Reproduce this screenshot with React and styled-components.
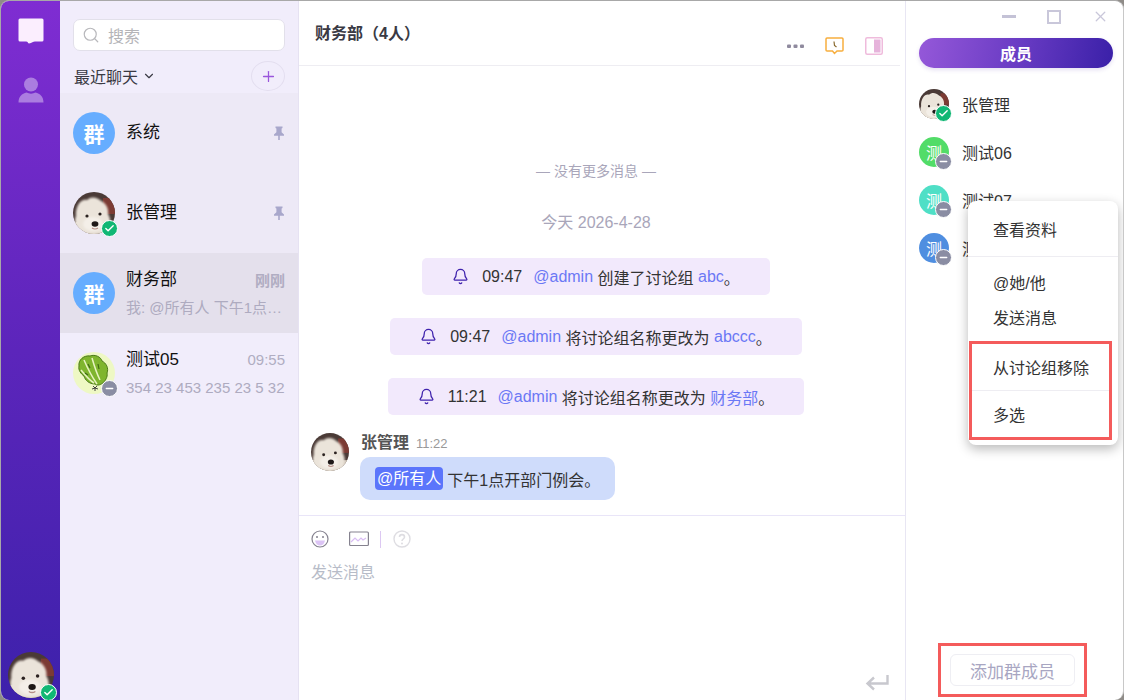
import { useId } from 'react';
import styled, { createGlobalStyle } from 'styled-components';
import { Search, ChevronDown, Plus, Bell, Check, Minus, X } from 'lucide-react';

const GlobalStyle = createGlobalStyle`
  html, body {
    margin: 0;
    padding: 0;
    background: #8f8c88;
    overflow: hidden;
  }
  * {
    box-sizing: border-box;
  }
  body {
    font-family: "Liberation Sans", "Noto Sans CJK SC", sans-serif;
    font-size: 16px;
    color: #333;
  }
`;

const Window = styled.div`
  position: relative;
  display: flex;
  width: 1124px;
  height: 700px;
  background: #fff;
  border-radius: 9px;
  border: 1px solid #a8a8a8;
  border-bottom: 0;
  border-right-color: #c8c8c8;
  overflow: hidden;
`;

const Sidebar = styled.aside`
  flex: 0 0 59px;
  display: flex;
  flex-direction: column;
  align-items: center;
  justify-content: space-between;
  padding: 17px 0 2px;
  background: linear-gradient(180deg, #7f2dd2 0%, #5c25bb 50%, #3d21ab 100%);
`;

const NavIcons = styled.div`
  display: flex;
  flex-direction: column;
  align-items: center;
  gap: 33px;
`;

const ListPane = styled.section`
  flex: 0 0 239px;
  display: flex;
  flex-direction: column;
  background: #f1edfb;
  border-right: 1px solid #e6e2f2;
`;

const SearchBox = styled.div`
  display: flex;
  align-items: center;
  gap: 8px;
  height: 32px;
  margin: 18px 13px 0;
  padding: 0 8px;
  background: #fff;
  border: 1px solid #e2e0ea;
  border-radius: 7px;
  color: #b4b4b8;
`;

const ListHead = styled.div`
  display: flex;
  align-items: center;
  justify-content: space-between;
  height: 30px;
  margin: 10px 13px 2px 14px;
`;

const ListTitle = styled.div`
  display: flex;
  align-items: center;
  gap: 4px;
  color: #3a3a44;
`;

const AddRound = styled.div`
  width: 34px;
  height: 30px;
  display: flex;
  align-items: center;
  justify-content: center;
  border: 1px solid #e3deef;
  border-radius: 50%;
  color: #9a56dc;
`;

const Row = styled.div`
  display: flex;
  align-items: center;
  gap: 11px;
  height: 80px;
  padding: 0 13px;
  background: ${(p) => (p.$active ? '#e4e0ec' : p.$pinned ? '#ede9f6' : 'transparent')};
`;

const RowBody = styled.div`
  flex: 1;
  min-width: 0;
  display: flex;
  flex-direction: column;
  gap: 7px;
`;

const RowLine = styled.div`
  display: flex;
  align-items: center;
  justify-content: space-between;
`;

const RowName = styled.span`
  font-size: 17px;
  line-height: 22px;
  color: #111;
`;

const RowTime = styled.span`
  font-size: 15px;
  font-weight: ${(p) => (p.$bold ? 700 : 400)};
  color: #b0adc2;
`;

const RowText = styled.div`
  font-size: 15px;
  line-height: 20px;
  color: #aeabc0;
  white-space: nowrap;
  overflow: hidden;
`;

const AvatarWrap = styled.div`
  position: relative;
  flex: 0 0 ${(p) => p.$size}px;
  width: ${(p) => p.$size}px;
  height: ${(p) => p.$size}px;
`;

const LetterAvatar = styled.div`
  width: 100%;
  height: 100%;
  display: flex;
  align-items: center;
  justify-content: center;
  border-radius: 50%;
  background: ${(p) => p.$bg};
  color: #fff;
  font-size: ${(p) => p.$fs}px;
  font-weight: ${(p) => p.$fw};
`;

const StatusDot = styled.span`
  position: absolute;
  right: -3px;
  bottom: -3px;
  width: 17px;
  height: 17px;
  display: flex;
  align-items: center;
  justify-content: center;
  border-radius: 50%;
  border: 1px solid #fff;
  background: ${(p) => (p.$on ? '#10b774' : '#8a8da3')};
  color: #fff;
`;

const ChatPane = styled.main`
  flex: 0 0 607px;
  display: flex;
  flex-direction: column;
  border-right: 1px solid #e8e6f3;
`;

const ChatHead = styled.header`
  flex: 0 0 65px;
  display: flex;
  justify-content: space-between;
  margin-right: 5px;
  padding: 23px 17px 0 16px;
  border-bottom: 1px solid #eeedf2;
`;

const ChatTitle = styled.h1`
  margin: 0;
  font-size: 16px;
  line-height: 20px;
  font-weight: 700;
  color: #3a3a44;
`;

const HeadIcons = styled.div`
  display: flex;
  align-items: center;
  gap: 21px;
  height: 20px;
  margin-top: 12px;
`;

const Messages = styled.div`
  flex: 1;
  display: flex;
  flex-direction: column;
  align-items: center;
  padding: 95px 12px 0 0;
`;

const NoMore = styled.div`
  font-size: 14px;
  line-height: 20px;
  color: #a9a6ba;
`;

const DayLine = styled.div`
  margin-top: 31px;
  line-height: 22px;
  color: #a9a6ba;
`;

const Notice = styled.div`
  display: flex;
  align-items: center;
  height: 37px;
  margin-top: ${(p) => p.$top}px;
  padding: 0 30px;
  background: #f2e9fc;
  border-radius: 5px;
  color: #333;
  white-space: pre;
`;

const NoticeTime = styled.span`
  margin: 0 11px 0 13px;
`;

const LinkText = styled.span`
  color: #6b78f5;
`;

const Message = styled.div`
  align-self: flex-start;
  display: flex;
  gap: 12px;
  margin: 18px 0 0 12px;
`;

const MessageBody = styled.div`
  display: flex;
  flex-direction: column;
  gap: 3px;
`;

const Sender = styled.div`
  display: flex;
  align-items: baseline;
  gap: 7px;
  line-height: 20px;
  font-weight: 700;
  color: #555;
`;

const SentAt = styled.span`
  font-size: 13px;
  font-weight: 400;
  color: #999;
`;

const Bubble = styled.div`
  display: flex;
  align-items: center;
  gap: 4px;
  height: 43px;
  margin-left: -1px;
  padding: 0 15px;
  background: #cfdcfb;
  border-radius: 10px;
`;

const Mention = styled.span`
  padding: 0 2px;
  line-height: 23px;
  background: #5b75fb;
  border-radius: 4px;
  color: #fff;
`;

const Composer = styled.div`
  position: relative;
  flex: 0 0 185px;
  padding: 13px 12px 0;
  border-top: 1px solid #e9e5f8;
`;

const ComposerTools = styled.div`
  display: flex;
  align-items: center;
  height: 20px;
`;

const ToolRule = styled.span`
  width: 1px;
  height: 17px;
  margin: 0 12px 0 11px;
  background: #dcc8f2;
`;

const Placeholder = styled.div`
  margin-top: 12px;
  line-height: 24px;
  color: #b7bcc8;
`;

const EnterIcon = styled.div`
  position: absolute;
  right: 16px;
  bottom: 8px;
  display: flex;
`;

const MemberPane = styled.aside`
  flex: 1;
  display: flex;
  flex-direction: column;
  padding: 0 10px 3px 13px;
`;

const WindowBar = styled.div`
  display: flex;
  align-items: center;
  justify-content: flex-end;
  gap: 31px;
  height: 37px;
  padding: 0 4px 6px 0;
  color: #c9c7da;
`;

const TabPill = styled.div`
  height: 30px;
  display: flex;
  align-items: center;
  justify-content: center;
  font-weight: 700;
  color: #fff;
  border-radius: 15px;
  background: linear-gradient(100deg, #9558d9 0%, #6a3cc4 50%, #3a20a8 100%);
  box-shadow: 0 2px 4px rgba(80, 50, 170, 0.15);
`;

const MemberList = styled.div`
  flex: 1;
  display: flex;
  flex-direction: column;
  gap: 18px;
  padding-top: 21px;
`;

const Member = styled.div`
  display: flex;
  align-items: center;
  gap: 13px;
  color: #333;
`;

const MemberFoot = styled.div`
  display: flex;
  justify-content: center;
  margin-right: 7px;
`;

const RedFrame = styled.div`
  border: 3px solid #f45b5b;
  padding: ${(p) => p.$pad || 0};
`;

const AddButton = styled.div`
  width: 125px;
  height: 32px;
  display: flex;
  align-items: center;
  justify-content: center;
  font-size: 17px;
  color: #a8a6c2;
  border: 1px solid #eeeef3;
  border-radius: 6px;
`;

const Menu = styled.div`
  position: absolute;
  left: 967px;
  top: 200px;
  width: 150px;
  padding: 1px 0 5px;
  background: #fff;
  border-radius: 8px;
  box-shadow: 0 4px 12px rgba(0, 0, 0, 0.28);
`;

const MenuItem = styled.div`
  display: flex;
  align-items: center;
  height: ${(p) => p.$h || 35}px;
  padding-left: ${(p) => p.$inset || 25}px;
  color: #333;
`;

const MenuRule = styled.div`
  height: 1px;
  background: #eeedf2;
`;

const MenuGroup = styled.div`
  padding: ${(p) => p.$pad};
`;

function Dog({ size }) {
  const id = useId();
  return (
    <svg width={size} height={size} viewBox="0 0 42 42" style={{ display: 'block' }}>
      <defs>
        <clipPath id={id}>
          <circle cx="21" cy="21" r="21" />
        </clipPath>
        <filter id={`${id}b`}>
          <feGaussianBlur stdDeviation="0.9" />
        </filter>
      </defs>
      <g clipPath={`url(#${id})`}>
        <rect width="42" height="42" fill="#4a3a36" />
        <rect x="30" y="6" width="12" height="16" fill="#7c3b34" />
        <rect y="30" width="42" height="12" fill="#cfc4b6" />
        <g filter={`url(#${id}b)`}>
          <path d="M3 24C2 13 9 6 14 8c4-4 10-3 14 1 3 1 8 6 7 13 3 5 3 11 0 16-5 4-22 6-28 1C2 34 1 28 3 24z" fill="#ebe4da" />
          <ellipse cx="20" cy="32" rx="10" ry="7" fill="#f4efe8" />
        </g>
        <circle cx="14" cy="24" r="1.6" fill="#2b2220" />
        <circle cx="27" cy="22" r="1.6" fill="#2b2220" />
        <ellipse cx="22" cy="32" rx="3.4" ry="2.8" fill="#1e1817" />
        <path d="M19 36q3 2 6 0" stroke="#b58e86" strokeWidth="1.2" fill="none" />
      </g>
    </svg>
  );
}

function Cabbage({ size }) {
  return (
    <svg width={size} height={size} viewBox="0 0 42 42" style={{ display: 'block' }}>
      <circle cx="21" cy="21" r="21" fill="#eef8c4" />
      <path d="M6 14C5 8 11 3 17 4c5-2 11 1 12 5 4 2 7 7 5 12 1 4-2 8-4 10-3 2-6 3-8 1-6 0-10-4-11-8-3-2-6-6-5-10z" fill="#7fb52e" stroke="#4c7a1a" strokeWidth="1" />
      <path d="M11 8c3 7 6 14 13 24M19 6c2 7 4 14 8 22M8 18c4 5 8 10 13 13" stroke="#e7f3c0" strokeWidth="1.5" fill="none" />
      <path d="M15 12l2 4M25 12l1 5M12 21l3 2" stroke="#3f6b14" strokeWidth="1.2" fill="none" />
      <path d="M20 34l2 2 2-2m-2 2v3m-3-2l3-1 3 1" stroke="#333" strokeWidth="0.9" fill="none" />
    </svg>
  );
}

function PinIcon() {
  return (
    <svg width="12" height="14" viewBox="0 0 12 14">
      <path d="M2.5 0.5h7v1.4L8.6 2.6v3.6L11 8.6V9.8H6.8V14H5.2V9.8H1V8.6l2.4-2.4V2.6L2.5 1.9z" fill="#a8a7cb" />
    </svg>
  );
}

function Status({ on }) {
  return (
    <StatusDot $on={on}>
      {on ? <Check size={11} strokeWidth={3} /> : <Minus size={11} strokeWidth={3} />}
    </StatusDot>
  );
}

function Notification({ top, time, action, target }) {
  return (
    <Notice $top={top}>
      <Bell size={17} color="#3f22ad" strokeWidth={1.8} />
      <NoticeTime>{time}</NoticeTime>
      <LinkText>@admin</LinkText>
      {` ${action} `}
      <LinkText>{target}</LinkText>。
    </Notice>
  );
}

const members = [
  { name: '测试06', bg: '#52dc68' },
  { name: '测试07', bg: '#4fdfc6' },
  { name: '测试08', bg: '#4f8ee0' },
];

export default function App() {
  return (
    <Window>
      <GlobalStyle />
      <Sidebar>
        <NavIcons>
          <svg width="26" height="26" viewBox="0 0 26 26">
            <path d="M2 0.5h22a1.5 1.5 0 0 1 1.5 1.5v20a1.5 1.5 0 0 1-1.5 1.500h-7c-2 0-3 1.500-6 2-1 0-1-2-3-2H2A1.500 1.500 0 0 1 .5 22V2A1.500 1.500 0 0 1 2 .5z" fill="#fbeefe" />
          </svg>
          <svg width="26" height="26" viewBox="0 0 26 26">
            <circle cx="13" cy="7.500" r="7" fill="#ab7de0" />
            <path d="M0.500 25.500c0-6 3.500-9 8-10 2.500 1.500 6.500 1.500 9 0 4.500 1 8 4 8 10z" fill="#ab7de0" />
          </svg>
        </NavIcons>
        <AvatarWrap $size={46}>
          <Dog size={46} />
          <Status on />
        </AvatarWrap>
      </Sidebar>

      <ListPane>
        <SearchBox>
          <Search size={18} strokeWidth={1.6} color="#b8b8bc" />
          <span>搜索</span>
        </SearchBox>
        <ListHead>
          <ListTitle>
            最近聊天
            <ChevronDown size={14} strokeWidth={2} />
          </ListTitle>
          <AddRound>
            <Plus size={17} strokeWidth={1.8} />
          </AddRound>
        </ListHead>
        <Row $pinned>
          <AvatarWrap $size={42}>
            <LetterAvatar $bg="#66adff" $fs={21} $fw={700}>群</LetterAvatar>
          </AvatarWrap>
          <RowBody>
            <RowLine>
              <RowName>系统</RowName>
              <PinIcon />
            </RowLine>
          </RowBody>
        </Row>
        <Row $pinned>
          <AvatarWrap $size={42}>
            <Dog size={42} />
            <Status on />
          </AvatarWrap>
          <RowBody>
            <RowLine>
              <RowName>张管理</RowName>
              <PinIcon />
            </RowLine>
          </RowBody>
        </Row>
        <Row $active>
          <AvatarWrap $size={42}>
            <LetterAvatar $bg="#66adff" $fs={21} $fw={700}>群</LetterAvatar>
          </AvatarWrap>
          <RowBody>
            <RowLine>
              <RowName>财务部</RowName>
              <RowTime $bold>刚刚</RowTime>
            </RowLine>
            <RowText>我: @所有人 下午1点…</RowText>
          </RowBody>
        </Row>
        <Row>
          <AvatarWrap $size={42}>
            <Cabbage size={42} />
            <Status />
          </AvatarWrap>
          <RowBody>
            <RowLine>
              <RowName>测试05</RowName>
              <RowTime>09:55</RowTime>
            </RowLine>
            <RowText>354 23 453 235 23 5 32</RowText>
          </RowBody>
        </Row>
      </ListPane>

      <ChatPane>
        <ChatHead>
          <ChatTitle>财务部（4人）</ChatTitle>
          <HeadIcons>
            <svg width="17" height="4" viewBox="0 0 17 4">
              <rect y="0.500" width="4" height="3.500" rx="1" fill="#8f8a9e" />
              <rect x="6.500" y="0.500" width="4" height="3.500" rx="1" fill="#8f8a9e" />
              <rect x="13" y="0.500" width="4" height="3.500" rx="1" fill="#8f8a9e" />
            </svg>
            <svg width="19" height="18" viewBox="0 0 19 18">
              <path d="M2 1h15a1 1 0 0 1 1 1v11a1 1 0 0 1-1 1h-5l-2.500 2.500L7.500 14H2a1 1 0 0 1-1-1V2a1 1 0 0 1 1-1z" fill="#fff" stroke="#f7ae3e" strokeWidth="1.500" />
              <path d="M9 4.500l.5 4 2 1.500" stroke="#8a6a30" strokeWidth="1.200" fill="none" />
            </svg>
            <svg width="18" height="18" viewBox="0 0 18 18">
              <rect x="0.750" y="0.750" width="16.500" height="16.500" rx="1.500" fill="#fff" stroke="#efbbdc" strokeWidth="1.500" />
              <rect x="9" y="2.500" width="6.500" height="13" fill="#e6b3db" />
            </svg>
          </HeadIcons>
        </ChatHead>
        <Messages>
          <NoMore>— 没有更多消息 —</NoMore>
          <DayLine>今天 2026-4-28</DayLine>
          <Notification top={24} time="09:47" action="创建了讨论组" target="abc" />
          <Notification top={23} time="09:47" action="将讨论组名称更改为" target="abccc" />
          <Notification top={23} time="11:21" action="将讨论组名称更改为" target="财务部" />
          <Message>
            <AvatarWrap $size={38}>
              <Dog size={38} />
            </AvatarWrap>
            <MessageBody>
              <Sender>
                张管理
                <SentAt>11:22</SentAt>
              </Sender>
              <Bubble>
                <Mention>@所有人</Mention>
                下午1点开部门例会。
              </Bubble>
            </MessageBody>
          </Message>
        </Messages>
        <Composer>
          <ComposerTools>
            <svg width="18" height="18" viewBox="0 0 18 18">
              <path d="M4 10.500h10c-.5 3-2.500 5-5 5s-4.500-2-5-5z" fill="#dcc4f5" />
              <circle cx="9" cy="9" r="8" fill="none" stroke="#85828f" strokeWidth="1.200" />
              <circle cx="6" cy="7" r="1" fill="#85828f" />
              <circle cx="12" cy="7" r="1" fill="#85828f" />
            </svg>
            <svg width="20" height="16" viewBox="0 0 20 16" style={{ marginLeft: 20 }}>
              <rect x="0.600" y="1" width="18.800" height="13.500" rx="1" fill="none" stroke="#85828f" strokeWidth="1.200" />
              <path d="M2 11l4-4 3 3 3-3 2 2 3-2" fill="none" stroke="#d9bdf3" strokeWidth="1.200" />
            </svg>
            <ToolRule />
            <svg width="18" height="18" viewBox="0 0 18 18">
              <circle cx="9" cy="9" r="8" fill="none" stroke="#dedde2" strokeWidth="1.400" />
              <path d="M6.500 7c0-3.200 5-3.200 5 0 0 2-2.500 2-2.500 4" fill="none" stroke="#dedde2" strokeWidth="1.600" />
              <circle cx="9" cy="13.500" r="1" fill="#dedde2" />
            </svg>
          </ComposerTools>
          <Placeholder>发送消息</Placeholder>
          <EnterIcon>
            <svg width="24" height="18" viewBox="0 0 24 18">
              <path d="M22.500 1v8.500H3M9 3.500L2.500 9.500 9 15.500" fill="none" stroke="#c8c8ce" strokeWidth="2.400" />
            </svg>
          </EnterIcon>
        </Composer>
      </ChatPane>

      <MemberPane>
        <WindowBar>
          <svg width="14" height="3" viewBox="0 0 14 3">
            <rect width="14" height="3" fill="#c4c2d6" />
          </svg>
          <svg width="14" height="14" viewBox="0 0 14 14">
            <rect x="1" y="1" width="12" height="12" fill="none" stroke="#c9c7da" strokeWidth="2" />
          </svg>
          <X size={17} strokeWidth={1.800} />
        </WindowBar>
        <TabPill>成员</TabPill>
        <MemberList>
          <Member>
            <AvatarWrap $size={30}>
              <Dog size={30} />
              <Status on />
            </AvatarWrap>
            张管理
          </Member>
          {members.map((m) => (
            <Member key={m.name}>
              <AvatarWrap $size={30}>
                <LetterAvatar $bg={m.bg} $fs={16} $fw={400}>测</LetterAvatar>
                <Status />
              </AvatarWrap>
              {m.name}
            </Member>
          ))}
        </MemberList>
        <MemberFoot>
          <RedFrame $pad="8px 9px">
            <AddButton>添加群成员</AddButton>
          </RedFrame>
        </MemberFoot>
      </MemberPane>

      <Menu>
        <MenuItem $h={54}>查看资料</MenuItem>
        <MenuRule />
        <MenuGroup $pad="7px 0 7px">
          <MenuItem>@她/他</MenuItem>
          <MenuItem>发送消息</MenuItem>
        </MenuGroup>
        <RedFrame style={{ marginRight: 6, marginLeft: 1 }}>
          <MenuItem $h={46} $inset={21}>从讨论组移除</MenuItem>
          <MenuRule />
          <MenuItem $h={46} $inset={21}>多选</MenuItem>
        </RedFrame>
      </Menu>
    </Window>
  );
}
